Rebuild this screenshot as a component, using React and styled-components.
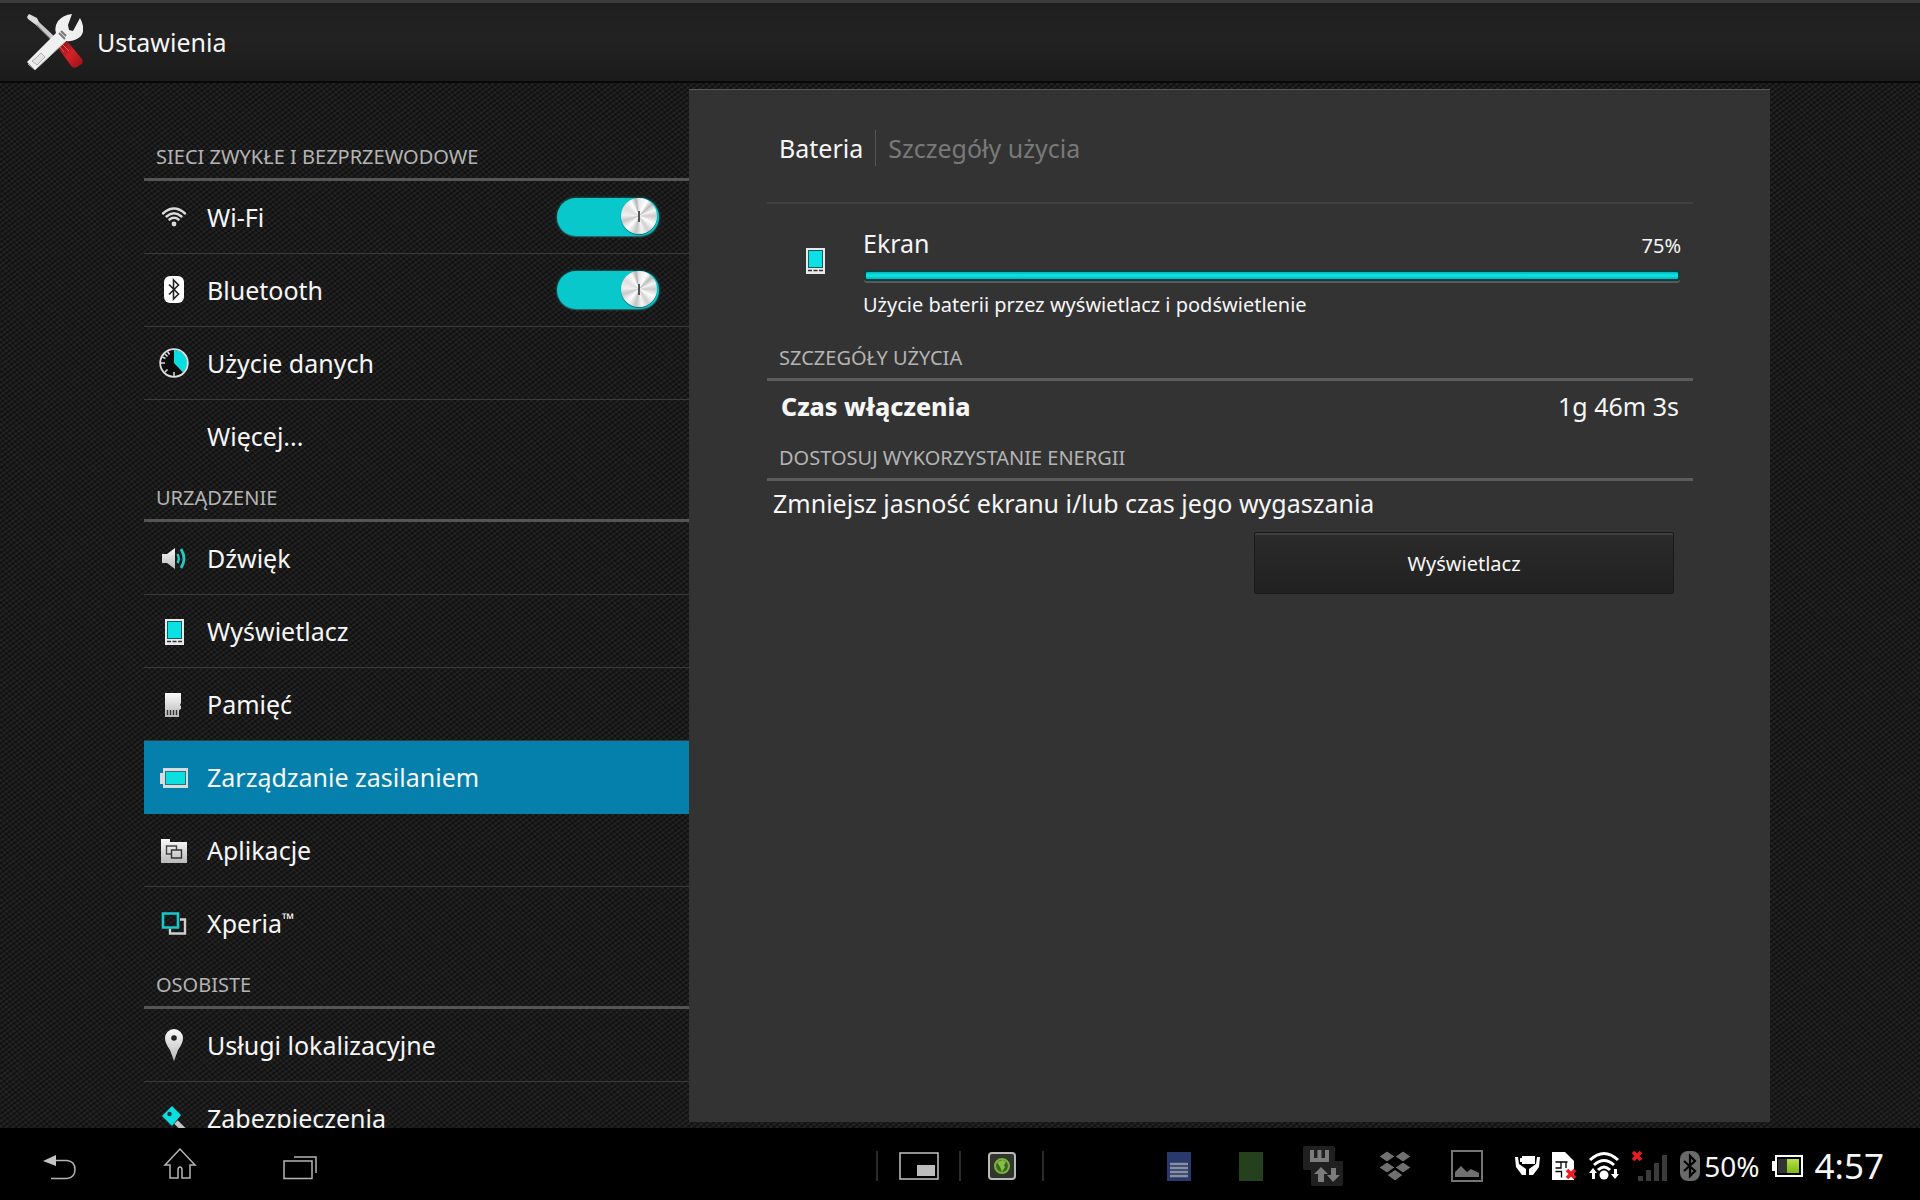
import React, { useState } from 'react'
import styled, { createGlobalStyle, ThemeProvider } from 'styled-components'

const theme = {
  accent: '#08c8cc',
  selected: '#0580ac',
  panel: '#333333',
  textPrimary: '#f6f6f6',
  textSecondary: '#b4b4b4',
  textMuted: '#797979',
  line: '#3a3a3a',
  lineStrong: '#555555',
}

const GlobalStyle = createGlobalStyle`
  * {
    box-sizing: border-box;
  }

  body {
    margin: 0;
    background: #000;
    font-family: 'Noto Sans', 'Open Sans', sans-serif;
    font-size: 25px;
    line-height: 34px;
    color: ${theme.textPrimary};
  }

  button {
    font: inherit;
    color: inherit;
    padding: 0;
    border: 0;
    background: none;
  }
`

const Screen = styled.div`
  height: 100vh;
  display: grid;
  grid-template-rows: auto minmax(0, 1fr) auto;
  background-color: #1b1b1b;
  background-image: repeating-linear-gradient(
      45deg,
      transparent 0,
      transparent 2px,
      rgba(0, 0, 0, 0.4) 3px,
      transparent 4px
    ),
    repeating-linear-gradient(
      -37deg,
      rgba(0, 0, 0, 0.3) 0,
      rgba(255, 255, 255, 0.05) 2px,
      rgba(0, 0, 0, 0.3) 4px
    );
`

const Header = styled.header`
  display: flex;
  align-items: center;
  gap: 14px;
  height: 83px;
  padding: 0 27px;
  border-top: 3px solid #3b3b3b;
  border-bottom: 2px solid #080808;
  background: linear-gradient(#1e1e1e, #222 45%, #1b1b1b);
`

const Title = styled.h1`
  margin: 0;
  font-size: 25px;
  font-weight: 400;
`

const Main = styled.main`
  display: grid;
  grid-template-columns: 545fr 1081fr;
  min-height: 0;
  padding: 0 150px 0 144px;
`

const Sidebar = styled.nav`
  padding-top: 49px;
  overflow: hidden;
`

const SectionTitle = styled.h2`
  display: flex;
  align-items: flex-end;
  height: 49px;
  margin: 0;
  padding: 0 12px 7px;
  border-bottom: 3px solid ${props => props.theme.lineStrong};
  font-size: 20px;
  line-height: 28px;
  font-weight: 400;
  text-transform: uppercase;
  color: ${props => props.theme.textSecondary};
`

const List = styled.ul`
  margin: 0;
  padding: 0;
  list-style: none;
`

const Item = styled.li`
  display: flex;
  align-items: center;
  height: 73px;
  padding: 0 30px 0 14px;
  border-bottom: 1px solid
    ${props => (props.$active ? props.theme.selected : props.theme.line)};
  background: ${props => (props.$active ? props.theme.selected : 'none')};

  &:last-child {
    border-color: transparent;
  }
`

const ItemLabel = styled.label`
  flex: 1;
  display: flex;
  align-items: center;
  gap: 17px;
`

const ItemLink = styled(ItemLabel).attrs({ as: 'a' })`
  color: inherit;
  text-decoration: none;
`

const Trademark = styled.sup`
  font-size: 16px;
  line-height: 0;
  vertical-align: 8px;
`

const IconSlot = styled.span`
  display: flex;
  width: 32px;
  height: 32px;
`

const Switch = styled.input`
  appearance: none;
  display: flex;
  justify-content: ${props => (props.checked ? 'flex-end' : 'flex-start')};
  width: 102px;
  height: 38px;
  margin: 0;
  padding: 0 2px;
  border-radius: 19px;
  background: ${props => (props.checked ? props.theme.accent : '#333')};
  box-shadow: 0 0 3px ${props => (props.checked ? '#0a8084' : '#555')},
    0 1px 1px #4a5555;

  &::before {
    content: '';
    width: 36px;
    height: 36px;
    border-radius: 50%;
    background: linear-gradient(#555, #555) center / 2px 11px no-repeat,
      conic-gradient(
        #e8e8e8,
        #fff 8%,
        #bbb 13%,
        #f5f5f5 19%,
        #ccc 25%,
        #fff 33%,
        #d0d0d0 41%,
        #f4f4f4 47%,
        #c4c4c4 53%,
        #fff 62%,
        #c8c8c8 70%,
        #f0f0f0 76%,
        #ddd 84%,
        #fff 92%,
        #b5b5b5 97%,
        #e8e8e8
      );
    box-shadow: 0 1px 1px #1d6668;
  }
`

const Panel = styled.section`
  margin: 6px 0;
  padding: 35px 77px 0 78px;
  border-top: 1px solid #585858;
  background: ${props => props.theme.panel};
`

const Crumbs = styled.div`
  display: flex;
  align-items: center;
  height: 79px;
  padding: 0 12px 32px;
  border-bottom: 2px solid #404040;
`

const Crumb = styled.span`
  padding-right: 12px;
  line-height: 36px;

  & + & {
    padding-left: 12px;
    border-left: 1px solid #555;
    color: ${props => props.theme.textMuted};
  }
`

const Usage = styled.div`
  display: grid;
  grid-template-columns: 32px 1fr;
  align-items: start;
  gap: 32px;
  padding: 22px 12px 12px 32px;
`

const UsageIcon = styled.div`
  display: flex;
  padding-top: 18px;
`

const UsageHead = styled.div`
  display: flex;
  justify-content: space-between;
  align-items: baseline;
`

const Small = styled.span`
  display: block;
  font-size: 20px;
  line-height: 28px;
`

const Meter = styled.div`
  height: 11px;
  margin: 10px 1px;
  border: 2px solid #0b3f42;
  border-radius: 3px;
  background: linear-gradient(#0bb0b2, #0be0e2 40%, #0be0e2 60%, #0bb0b2);
  box-shadow: 0 2px 0 #5a5a5a;
`

const Group = styled.div`
  padding-top: 2px;

  ${SectionTitle} {
    height: 48px;
    padding-bottom: 6px;
    border-color: #5c5c5c;
  }
`

const Fact = styled.div`
  display: flex;
  justify-content: space-between;
  padding: 8px 14px;
`

const FactName = styled.strong`
  font-weight: 800;
`

const Hint = styled.p`
  margin: 0;
  padding: 5px 6px 9px;
`

const Actions = styled.div`
  display: flex;
  justify-content: flex-end;
  padding: 3px 19px;
`

const PanelButton = styled.button`
  width: 420px;
  height: 62px;
  padding-top: 2px;
  border: 1px solid #1a1a1a;
  border-radius: 2px;
  background: linear-gradient(#2b2b2b, #212121);
  box-shadow: inset 0 2px 0 #3f3f3f;
  font-size: 20px;
`

const Footer = styled.footer`
  display: grid;
  grid-template-columns: 1fr auto 1fr;
  align-items: center;
  height: 72px;
  background: #000;
`

const NavKeys = styled.div`
  display: flex;
`

const NavKey = styled.button`
  display: flex;
  justify-content: center;
  align-items: center;
  width: 120px;
  height: 72px;
`

const Shortcuts = styled.div`
  display: flex;
  padding-top: 4px;
`

const Shortcut = styled.button`
  display: flex;
  justify-content: center;
  align-items: center;
  width: 83px;
  height: 30px;
  border-left: 2px solid #2b2b2b;

  &:last-child {
    width: 85px;
    border-right: 2px solid #2b2b2b;
  }
`

const Tray = styled.div`
  display: flex;
  justify-content: flex-end;
  align-items: center;
  gap: 12px;
  padding: 3px 36px 0 0;
`

const Notices = styled.div`
  display: flex;
  align-items: center;
`

const Notice = styled.span`
  display: flex;
  justify-content: center;
  width: 72px;
`

const Level = styled.span`
  display: flex;
  align-items: center;
  gap: 4px;
  font-size: 28px;
  line-height: 36px;
`

const Clock = styled.time`
  font-size: 35px;
  line-height: 36px;
`

const Icon = ({ size = 32, width = size, height = size, children }) => (
  <svg
    width={width}
    height={height}
    viewBox={`0 0 ${width} ${height}`}
    fill="none"
    aria-hidden="true"
  >
    {children}
  </svg>
)

const HiddenSvg = styled.svg`
  position: absolute;
`

const Defs = () => (
  <HiddenSvg width="0" height="0" aria-hidden="true">
    <defs>
      <linearGradient id="silver" x1="0" y1="0" x2="0" y2="1">
        <stop offset="0" stopColor="#fafafa" />
        <stop offset="1" stopColor="#b9b9b9" />
      </linearGradient>
      <linearGradient id="red" x1="0" y1="0" x2="1" y2="1">
        <stop offset="0" stopColor="#7c0d12" />
        <stop offset="0.5" stopColor="#d3222a" />
        <stop offset="1" stopColor="#9b0f14" />
      </linearGradient>
      <linearGradient id="green" x1="0" y1="0" x2="0" y2="1">
        <stop offset="0" stopColor="#b6e04a" />
        <stop offset="1" stopColor="#7db710" />
      </linearGradient>
    </defs>
  </HiddenSvg>
)

const ToolsIcon = () => (
  <Icon size={56}>
    <path d="M0 3 2 0l8 4 3 6-4 1L1 5z" fill="#ddd" />
    <path d="m9 10 3-2 16 15-3 4z" fill="#c9c9c9" />
    <path d="m9 11 16 15" stroke="#888" />
    <path
      d="m31 34 9-7 15 18q2 4-2 6-4 4-8 2z"
      fill="url(#red)"
    />
    <path d="m35 30 7 7M33 33l4 5" stroke="#f0575c" />
    <path
      d="M0 48 29 19Q27 13 31 7 36 1 45 0L41 11l1 5 4 1 7-13Q59 15 54 22 48 28 39 27L8 56z"
      fill="#f0f0f0"
    />
    <path d="m1 50 7 6 31-29" stroke="#bdbdbd" />
    <path d="m32 19 6 6M34 17l5 5" stroke="#777" strokeWidth="2" />
    <path d="m9 44 5-5 4 4-8 8-5-4z" stroke="#b0b0b0" fill="#e4e4e4" />
  </Icon>
)

const WifiIcon = () => (
  <Icon>
    <g stroke="#dcdcdc" strokeWidth="2.4" strokeLinecap="round">
      <path d="M5 12.5Q16 2.500 27 12.500" />
      <path d="M8.500 15.500Q16 9 23.500 15.500" />
      <path d="M11.500 18.500Q16 15 20.500 18.500" />
    </g>
    <circle cx="16" cy="23" r="2.400" fill="#dcdcdc" />
  </Icon>
)

const BluetoothIcon = () => (
  <Icon>
    <rect x="6" y="2" width="20" height="27" rx="6" fill="#fff" />
    <path d="m11 10.500 9.500 9.500-5 5V6l5 5L11 20.500" stroke="#222" strokeWidth="1.600" />
  </Icon>
)

const DataIcon = () => (
  <Icon>
    <circle cx="16" cy="16" r="13.800" fill="#0c0c0c" />
    <path d="M16 3v13l9 9.500A13 13 0 0 0 16 3z" fill="#08dde0" />
    <path
      d="M16 29v-4M3 16h4M7 7l2.500 2.500M7 25l2.500-2.500M9.500 4.500l2 3M4.500 10l3 1.500"
      stroke="#ddd"
      strokeWidth="1.500"
    />
    <circle cx="16" cy="16" r="13.800" stroke="#dedede" strokeWidth="1.800" />
  </Icon>
)

const SoundIcon = () => (
  <Icon>
    <path d="M4 12h5l8-6v21l-8-6H4z" fill="url(#silver)" />
    <path d="M19.500 12q2.500 5 0 9" stroke="#22c9c5" strokeWidth="2.400" />
    <path d="M23 7q6 10 0 19" stroke="#22c9c5" strokeWidth="2.800" />
  </Icon>
)

const DisplayIcon = () => (
  <Icon>
    <path d="M7 4h19v26H7z" fill="#e9e9e9" />
    <path d="M9 6h15v18H9z" fill="#0c5c60" />
    <path d="M10 7h13v16H10z" fill="#0be0e4" />
    <path d="M9 26.500h4M14.500 26.500h4M20 26.500h4" stroke="#333" strokeWidth="1.600" />
  </Icon>
)

const CardIcon = () => (
  <Icon>
    <path d="M7 5h16v10l-1 2 1 1v3l-2 1v7H7z" fill="url(#silver)" />
    <path d="M9.500 22v5M12.500 22v5M15.500 22v5M18.500 22v5" stroke="#333" strokeWidth="1.400" />
  </Icon>
)

const PowerIcon = () => (
  <Icon>
    <path d="M5 7h25v20H5v-4H2V12h3z" fill="#d5dde0" />
    <path d="M7 10h21v14H7z" fill="#2d7077" />
    <path d="M8 11h19v12H8z" fill="#0be0e0" />
  </Icon>
)

const AppsIcon = () => (
  <Icon>
    <path d="M3 5h9v3h17v21H3z" fill="url(#silver)" />
    <path d="M14 20H8.500v-8h10v4" stroke="#444" strokeWidth="1.400" />
    <path d="M13.500 16h10v8h-10z" stroke="#333" strokeWidth="1.400" />
  </Icon>
)

const XperiaIcon = () => (
  <Icon>
    <path d="M22 12.500h5v14H12v-5" stroke="#cfcfcf" strokeWidth="2.400" />
    <path d="M5 6.500h15v14H5z" stroke="#18c9cc" strokeWidth="2.600" />
  </Icon>
)

const PinIcon = () => (
  <Icon>
    <path
      d="M16 0a9 9 0 0 1 9 9q0 5-5 12l-4 11-4-11Q7 14 7 9a9 9 0 0 1 9-9z"
      fill="url(#silver)"
    />
    <circle cx="16" cy="9" r="2.800" fill="#222" />
  </Icon>
)

const KeyIcon = () => (
  <Icon>
    <path d="m18 20 11 11" stroke="#c4c4c4" strokeWidth="5" />
    <path d="M14 4l9 9-9 11L4 14z" fill="#0bdde0" />
    <circle cx="11.500" cy="12" r="2.200" fill="#234" />
  </Icon>
)

const RedCross = ({ x, y }) => (
  <path d={`m${x} ${y} 8 8m0-8-8 8`} stroke="#ea1c22" strokeWidth="3.600" />
)

const sections = [
  {
    title: 'Sieci zwykłe i bezprzewodowe',
    items: [
      { id: 'wifi', label: 'Wi-Fi', icon: WifiIcon, toggle: true },
      { id: 'bt', label: 'Bluetooth', icon: BluetoothIcon, toggle: true },
      { id: 'data', label: 'Użycie danych', icon: DataIcon },
      { id: 'more', label: 'Więcej...' },
    ],
  },
  {
    title: 'Urządzenie',
    items: [
      { id: 'sound', label: 'Dźwięk', icon: SoundIcon },
      { id: 'display', label: 'Wyświetlacz', icon: DisplayIcon },
      { id: 'memory', label: 'Pamięć', icon: CardIcon },
      { id: 'power', label: 'Zarządzanie zasilaniem', icon: PowerIcon },
      { id: 'apps', label: 'Aplikacje', icon: AppsIcon },
      { id: 'xperia', label: 'Xperia', icon: XperiaIcon, trademark: true },
    ],
  },
  {
    title: 'Osobiste',
    items: [
      { id: 'location', label: 'Usługi lokalizacyjne', icon: PinIcon },
      { id: 'security', label: 'Zabezpieczenia', icon: KeyIcon },
    ],
  },
]

const MenuItem = ({ item, active }) => {
  const [on, setOn] = useState(true)
  const Glyph = item.icon
  const content = (
    <>
      <IconSlot>{Glyph && <Glyph />}</IconSlot>
      <span>
        {item.label}
        {item.trademark && <Trademark>™</Trademark>}
      </span>
    </>
  )

  return (
    <Item $active={active}>
      {item.toggle ? (
        <>
          <ItemLabel htmlFor={item.id}>{content}</ItemLabel>
          <Switch
            id={item.id}
            type="checkbox"
            checked={on}
            onChange={e => setOn(e.target.checked)}
          />
        </>
      ) : (
        <ItemLink href={`#${item.id}`}>{content}</ItemLink>
      )}
    </Item>
  )
}

const Details = () => (
  <Panel>
    <Crumbs>
      <Crumb>Bateria</Crumb>
      <Crumb>Szczegóły użycia</Crumb>
    </Crumbs>
    <Usage>
      <UsageIcon>
        <DisplayIcon />
      </UsageIcon>
      <div>
        <UsageHead>
          <span>Ekran</span>
          <Small>75%</Small>
        </UsageHead>
        <Meter />
        <Small>Użycie baterii przez wyświetlacz i podświetlenie</Small>
      </div>
    </Usage>
    <Group>
      <SectionTitle>Szczegóły użycia</SectionTitle>
      <Fact>
        <FactName>Czas włączenia</FactName>
        <span>1g 46m 3s</span>
      </Fact>
    </Group>
    <Group>
      <SectionTitle>Dostosuj wykorzystanie energii</SectionTitle>
      <Hint>Zmniejsz jasność ekranu i/lub czas jego wygaszania</Hint>
      <Actions>
        <PanelButton>Wyświetlacz</PanelButton>
      </Actions>
    </Group>
  </Panel>
)

const SystemBar = () => (
  <Footer>
    <NavKeys>
      <NavKey aria-label="Wstecz">
        <Icon size={34}>
          <path d="M0 14 13 8v11z" fill="#c4c4c4" />
          <path d="M13 13.500h11q8 1 8 9t-8 9H8" stroke="#b5b5b5" strokeWidth="1.500" />
        </Icon>
      </NavKey>
      <NavKey aria-label="Ekran główny">
        <Icon size={34}>
          <path
            d="M17 2 2 18h5v13h8v-8q0-3 2-3t2 3v8h8V18h5z"
            stroke="#b5b5b5"
            strokeWidth="1.500"
          />
        </Icon>
      </NavKey>
      <NavKey aria-label="Ostatnie">
        <Icon size={34}>
          <path d="M1 14h28v17.500H1zM11 10h22v16" stroke="#b5b5b5" strokeWidth="1.500" />
        </Icon>
      </NavKey>
    </NavKeys>
    <Shortcuts>
      <Shortcut aria-label="Małe aplikacje">
        <Icon width={40} height={28}>
          <path d="M1 1h38v26H1z" stroke="#c4c4c4" strokeWidth="1.500" />
          <path d="M18 13h18v11H18z" fill="#bcbcbc" />
        </Icon>
      </Shortcut>
      <Shortcut aria-label="Przeglądarka">
        <Icon size={28}>
          <rect x="1" y="1" width="26" height="26" rx="3" fill="#30362c" stroke="#b9b9b9" strokeWidth="2" />
          <circle cx="14" cy="14" r="7" fill="#3d6522" stroke="#79b33e" strokeWidth="2" />
          <path d="m9 10 6-2 3 2-2 3 1 2-3 5-2-5z" fill="#86bd49" />
        </Icon>
      </Shortcut>
    </Shortcuts>
    <Tray>
      <Notices>
        <Notice>
          <Icon width={24} height={30}>
            <path d="M0 1h24v29H0z" fill="#29396b" />
            <path d="M3 13h18M3 17h18M3 21h18M3 25h18" stroke="#8a8f9c" strokeWidth="2.400" />
          </Icon>
        </Notice>
        <Notice>
          <Icon width={24} height={30}>
            <path d="M0 1h24v29H0z" fill="#24401c" />
          </Icon>
        </Notice>
        <Notice>
          <Icon size={40}>
            <path
              d="M2 0h28q2 0 2 2v13h8v23q0 2-2 2H10q-2 0-2-2V24H2q-2 0-2-2V2q0-2 2-2z"
              fill="#202020"
            />
            <path d="M9 4v10h15V4M16.500 4v10" stroke="#7c7c7c" strokeWidth="4" />
            <path
              d="m18 21 7 7h-4v8h-6v-8h-4zM30 36l-6-7h4v-7h5v7h4z"
              fill="#7c7c7c"
            />
          </Icon>
        </Notice>
        <Notice>
          <Icon width={34} height={32}>
            <path
              d="M9 1l8 5.500L9 12 1 6.500zM25 1l8 5.500-8 5.500-8-5.500zM9 12l8 5.500L9 23l-8-5.500zM25 12l8 5.500-8 5.500-8-5.500zM17 19.500l8 5.500-8 6-8-6z"
              fill="#707070"
              stroke="#000"
            />
          </Icon>
        </Notice>
        <Notice>
          <Icon size={32}>
            <path d="M1 1h30v30H1z" stroke="#757575" strokeWidth="2" />
            <path d="M4 27v-5l6-6 6 6 4-3 8 4v4z" fill="#707070" />
          </Icon>
        </Notice>
      </Notices>
      <Icon width={25} height={22}>
        <path d="M7 1h13v8H7V7H5V3h2z" fill="#fff" />
        <path
          d="M0 2h3l1 7 7 5v6H7L1 12zM25 2h-3l-1 7-7 5v6h4l6-8z"
          fill="#fff"
        />
      </Icon>
      <Icon width={25} height={30}>
        <path d="M0 1h13l9 9v19H0z" fill="#fff" />
        <path d="M3.500 11h12M9 11v6H3.500M14 11v6M3.500 20.500h6v6" stroke="#000" strokeWidth="1.300" />
        <RedCross x={15} y={19} />
      </Icon>
      <Icon width={30} height={30}>
        <g stroke="#fff" strokeWidth="3">
          <path d="M1 9Q15-4 29 9" />
          <path d="M5 14Q15 5 25 14" />
          <path d="M9 19Q15 13 21 19" />
        </g>
        <circle cx="15" cy="24" r="4.500" fill="#fff" />
        <path d="m4 17 4 5H6v6H3v-6H0zM26 28l4-5h-2v-5h-3v5h-3z" fill="#fff" />
      </Icon>
      <Icon width={37} height={32}>
        <path d="M7 26h5v5H7zM15 20h5v11h-5zM23 13h5v18h-5zM31 5h5v26h-5z" fill="#3b3b3b" />
        <RedCross x={2} y={2} />
      </Icon>
      <Level>
        <Icon width={20} height={30}>
          <rect width="20" height="30" rx="8" fill="#6a6a6a" />
          <path d="m4 10 11 10-5 5V5l5 5L4 20" stroke="#000" strokeWidth="2.200" />
        </Icon>
        50%
      </Level>
      <Icon width={31} height={22}>
        <path d="M0 6h4v10H0z" fill="#fff" />
        <path d="M4 1h26v20H4z" stroke="#fff" strokeWidth="2" />
        <path d="M6 4h9v14H6z" fill="#333" />
        <path d="M15 4h12v14H15z" fill="url(#green)" />
      </Icon>
      <Clock>4:57</Clock>
    </Tray>
  </Footer>
)

const App = () => {
  return (
    <ThemeProvider theme={theme}>
      <GlobalStyle />
      <Defs />
      <Screen>
        <Header>
          <ToolsIcon />
          <Title>Ustawienia</Title>
        </Header>
        <Main>
          <Sidebar>
            {sections.map(section => (
              <div key={section.title}>
                <SectionTitle>{section.title}</SectionTitle>
                <List>
                  {section.items.map(item => (
                    <MenuItem
                      key={item.id}
                      item={item}
                      active={item.id === 'power'}
                    />
                  ))}
                </List>
              </div>
            ))}
          </Sidebar>
          <Details />
        </Main>
        <SystemBar />
      </Screen>
    </ThemeProvider>
  )
}

export default App
